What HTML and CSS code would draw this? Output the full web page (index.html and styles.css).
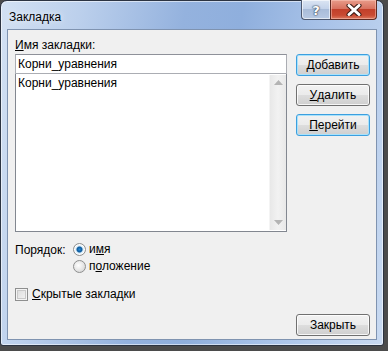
FILE: index.html
```html
<!DOCTYPE html>
<html lang="ru">
<head>
<meta charset="utf-8">
<title>Закладка</title>
<link rel="stylesheet" href="styles.css">
</head>
<body>
<div class="window">
  <div class="titlebar">
    <span class="title">Закладка</span>
    <div class="caption-buttons">
      <div class="cap-btn help"><span>?</span></div>
      <div class="cap-btn close">
        <svg width="20" height="12" viewBox="0 0 20 12">
          <path d="M5 1.5 L15 10.5 M15 1.5 L5 10.5" stroke="#3b1b14" stroke-width="5" stroke-linecap="round"/>
          <path d="M5 1.5 L15 10.5 M15 1.5 L5 10.5" stroke="#ffffff" stroke-width="3" stroke-linecap="round"/>
        </svg>
      </div>
    </div>
  </div>
  <div class="client">
    <div class="top">
      <div class="left">
        <div class="label"><u>И</u>мя закладки:</div>
        <div class="input">Корни_уравнения</div>
        <div class="list">
          <div class="list-items">
            <div class="item">Корни_уравнения</div>
          </div>
          <div class="scrollbar">
            <svg class="arrow" width="9" height="5" viewBox="0 0 9 5"><path d="M0 5 L4.5 0 L9 5 Z" fill="#b4b4b4"/></svg>
            <svg class="arrow" width="9" height="5" viewBox="0 0 9 5"><path d="M0 0 L4.5 5 L9 0 Z" fill="#b4b4b4"/></svg>
          </div>
        </div>
      </div>
      <div class="right">
        <div class="btn default"><u>Д</u>обавить</div>
        <div class="btn"><u>У</u>далить</div>
        <div class="btn default"><u>П</u>ерейти</div>
      </div>
    </div>
    <div class="order">
      <div class="order-label">Порядок:</div>
      <div class="radios">
        <div class="opt"><span class="radio checked"></span><span>и<u>м</u>я</span></div>
        <div class="opt"><span class="radio"></span><span>п<u>о</u>ложение</span></div>
      </div>
    </div>
    <div class="check-row"><span class="checkbox"></span><span><u>С</u>крытые закладки</span></div>
    <div class="bottom">
      <div class="btn">Закрыть</div>
    </div>
  </div>
</div>
</body>
</html>
```
FILE: styles.css
```css
html, body {
  margin: 0;
  padding: 0;
}
body {
  width: 388px;
  height: 351px;
  background: #4b4b4b;
  font-family: "Liberation Sans", Arial, sans-serif;
  font-size: 12px;
  color: #000;
  overflow: hidden;
}
u { text-decoration: underline; text-underline-offset: 1px; }

.window {
  width: 384px;
  height: 346px;
  box-sizing: border-box;
  border: 1px solid #2c3442;
  border-radius: 7px 7px 3px 3px;
  background: linear-gradient(100deg, #d3e1f3 0%, #bcd0ec 18%, #94b2de 42%, #8fafdd 55%, #aac4e9 75%, #c9daf1 100%);
  padding: 0 6px 5px 6px;
  display: flex;
  flex-direction: column;
  box-shadow: inset 0 0 0 1px rgba(255,255,255,0.55);
}
.titlebar {
  height: 28px;
  display: flex;
  justify-content: space-between;
  align-items: flex-start;
}
.title {
  padding-left: 2px;
  margin-top: 9px;
  font-size: 12px;
  color: #000;
  text-shadow: 0 0 6px rgba(255,255,255,0.9);
}
.caption-buttons {
  display: flex;
  margin-top: -1px;
}
.cap-btn {
  height: 20px;
  box-sizing: border-box;
  border: 1px solid #4c5870;
  border-top: none;
  display: flex;
  align-items: center;
  justify-content: center;
}
.help {
  width: 29px;
  border-radius: 0 0 0 4px;
  border-right: none;
  background: linear-gradient(#dbe5f3 0%, #c4d3ea 45%, #a9bcd9 50%, #b7c9e3 100%);
  box-shadow: inset 0 0 0 1px rgba(255,255,255,0.6);
}
.help span {
  font-family: "DejaVu Sans", sans-serif;
  font-weight: bold;
  font-size: 13px;
  color: #fff;
  text-shadow: 0 0 1px #3a4658, 0 0 1px #3a4658, 0 0 2px #3a4658;
  margin-top: 1px;
}
.close {
  width: 47px;
  border-radius: 0 0 4px 0;
  background: linear-gradient(#e89c8a 0%, #d87260 45%, #c2402a 50%, #c94a32 80%, #dc7a60 100%);
  box-shadow: inset 0 0 0 1px rgba(255,210,200,0.45);
  border-color: #5d2a22;
}

.client {
  flex: 1;
  background: #f0f0f0;
  border: 1px solid #7f93b0;
  padding: 8px 6px 0 7px;
  display: flex;
  flex-direction: column;
}
.top {
  display: flex;
  gap: 9px;
}
.left {
  width: 272px;
  display: flex;
  flex-direction: column;
}
.label {
  height: 16px;
  line-height: 14px;
}
.input {
  height: 20px;
  box-sizing: border-box;
  border: 1px solid #abadb3;
  border-top-color: #8e9199;
  background: #fff;
  padding: 2px 0 0 2px;
  line-height: 15px;
}
.list {
  height: 158px;
  box-sizing: border-box;
  border: 1px solid #828790;
  border-top: none;
  background: #fff;
  display: flex;
}
.list-items {
  flex: 1;
  padding: 2px 0 0 2px;
}
.item { line-height: 14px; }
.scrollbar {
  width: 16px;
  margin: 1px 0 1px 0;
  background: linear-gradient(90deg, #e8e8e8, #f2f2f2 50%, #e8e8e8);
  border-left: 1px solid #f4f4f4;
  display: flex;
  flex-direction: column;
  justify-content: space-between;
  align-items: center;
  padding: 5px 0 5px 0;
}
.right {
  width: 74px;
  padding-top: 16px;
  display: flex;
  flex-direction: column;
  gap: 8px;
}
.btn {
  width: 74px;
  height: 22px;
  box-sizing: border-box;
  border: 1px solid #707070;
  border-radius: 3px;
  background: linear-gradient(#f2f2f2 0%, #ebebeb 50%, #dddddd 51%, #cfcfcf 100%);
  box-shadow: inset 0 0 0 1px rgba(255,255,255,0.8);
  display: flex;
  align-items: center;
  justify-content: center;
  line-height: 14px;
}
.btn.default {
  border-color: #3c9fdf;
  box-shadow: inset 0 0 0 1px #a9e2fb;
}

.order {
  display: flex;
  margin-top: 10px;
}
.order-label {
  width: 58px;
  line-height: 14px;
  padding-top: 1px;
}
.radios {
  display: flex;
  flex-direction: column;
  gap: 3px;
}
.opt {
  display: flex;
  align-items: center;
  gap: 3px;
  line-height: 14px;
}
.radio {
  width: 11px;
  height: 11px;
  border-radius: 50%;
  border: 1px solid #8e8f8f;
  background: radial-gradient(circle at 40% 40%, #ffffff, #e2e2e2 60%, #c9c9c9);
  display: inline-block;
  flex: none;
}
.radio.checked {
  background: radial-gradient(circle, #2a8ad4 0, #0d5a9c 2.5px, #d4e8f6 3.5px, #ffffff 5px, #e3e3e3 6px);
}
.check-row {
  display: flex;
  align-items: center;
  gap: 4px;
  margin-top: 14px;
  line-height: 14px;
}
.checkbox {
  width: 11px;
  height: 11px;
  border: 1px solid #8e8f8f;
  background: linear-gradient(135deg, #d9d9d9, #f6f6f6);
  box-shadow: inset 0 0 0 1px #f4f4f4, inset 0 0 0 2px #c9c9c9;
  flex: none;
}
.bottom {
  display: flex;
  justify-content: flex-end;
  margin-top: 13px;
}
```
